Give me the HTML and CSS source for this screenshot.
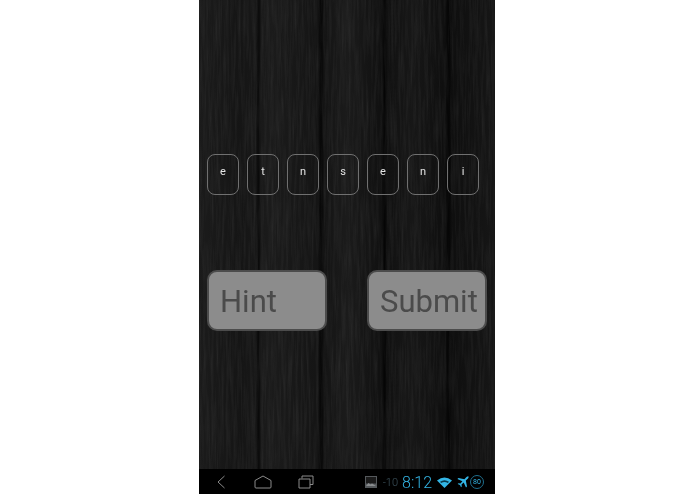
FILE: index.html
```
<!DOCTYPE html>
<html lang="en">
<head>
<meta charset="utf-8">
<title>Word game</title>
<link rel="stylesheet" href="styles.css">
</head>
<body>
<main class="phone">
  <section class="game">
    <svg class="grain" width="296" height="469" aria-hidden="true">
      <filter id="wood" x="0" y="0" width="100%" height="100%">
        <feTurbulence type="fractalNoise" baseFrequency="0.4 0.02" numOctaves="4" seed="7"/>
        <feColorMatrix type="matrix" values="0 0 0 0 1  0 0 0 0 1  0 0 0 0 1  1.5 0 0 0 -0.62"/>
      </filter>
      <rect width="296" height="469" filter="url(#wood)"/>
    </svg>
    <div class="tiles">
      <span class="tile">e</span><span class="tile">t</span><span class="tile">n</span><span class="tile">s</span><span class="tile">e</span><span class="tile">n</span><span class="tile">i</span>
    </div>
    <div class="actions">
      <button class="action">Hint</button>
      <button class="action">Submit</button>
    </div>
  </section>
  <footer class="navbar">
    <div class="nav-keys">
      <svg class="key-back" width="10" height="14" viewBox="0 0 10 14"><path d="M8.500 1 2 7l6.500 6"/></svg>
      <svg class="key-home" width="18" height="14" viewBox="0 0 18 14"><path d="M1 5.500 9 1l8 4.500V12q0 1-1 1H2q-1 0-1-1z"/></svg>
      <svg class="key-recent" width="16" height="14" viewBox="0 0 16 14"><path d="M4 3.500V1h11v8.500h-3M1 4h11v9H1z"/></svg>
    </div>
    <div class="status">
      <svg class="pic" width="12" height="12" viewBox="0 0 12 12"><rect width="12" height="12" fill="#55595c"/><rect x="1" y="1" width="10" height="6.500" fill="#1a1a1a"/><path d="M1 10 3.500 7l2 1.500L7 7.500 11 10z" fill="#8a8d8f"/></svg>
      <span class="temp">-10</span>
      <span class="clock">8:12</span>
      <svg class="wifi" width="15" height="11" viewBox="0 0 15 11"><path d="M0 3.500Q7.500-2.500 15 3.500L7.500 11z" fill="#33b5e5"/><path d="M3 4.800Q7.500 1.700 12 4.800L10.800 6Q7.500 3.800 4.200 6z" fill="#0a3a4c"/></svg>
      <svg class="plane" width="12" height="12" viewBox="0 0 12 12"><path d="M11.500.5q.5.500-.5 2L8.800 4.600l1.200 6-1 1-2.300-5L4.500 8.500l.3 2-.8.800-1-2.300L.7 8l.8-.8 2 .3 1.900-2.200L.4 3l1-1 6 1.200L9.500 1q1.500-1 2-.5z" fill="#33b5e5"/></svg>
      <span class="battery">80</span>
    </div>
  </footer>
</main>
</body>
</html>
```
FILE: styles.css
```
* { box-sizing: border-box; }
html, body { margin: 0; height: 100%; background: #fff; }
body { display: flex; justify-content: center; padding-right: 1px; }
.phone { width: 296px; height: 494px; display: flex; flex-direction: column; background: #000; font-family: Roboto, "Liberation Sans", sans-serif; }
.game {
  position: relative;
  flex: 1;
  padding: 154px 8px 0;
  background:
    linear-gradient(90deg, transparent 57px, rgba(0,0,0,.6) 59px, rgba(0,0,0,.6) 60px, transparent 62px),
    linear-gradient(90deg, transparent 119px, rgba(0,0,0,.6) 121px, rgba(0,0,0,.6) 123px, transparent 125px),
    linear-gradient(90deg, transparent 183px, rgba(0,0,0,.7) 185px, rgba(0,0,0,.7) 186px, transparent 188px),
    linear-gradient(90deg, transparent 246px, rgba(0,0,0,.6) 249px, rgba(0,0,0,.6) 250px, transparent 253px),
    linear-gradient(90deg, #1b1b1b 0, #151515 14%, #1b1b1b 24%, #141414 42%, #1b1b1b 50%, #101010 62%, #171717 72%, #0e0e0e 84%, #161616 100%);
}
.grain { position: absolute; inset: 0; opacity: .08; mix-blend-mode: screen; }
.tiles { position: relative; display: flex; gap: 8px; }
.tile {
  width: 32px;
  height: 41px;
  display: flex;
  align-items: center;
  justify-content: center;
  padding-bottom: 6px;
  border: 1px solid #707070;
  border-radius: 8px;
  color: #e4e4e4;
  font-size: 11px;
}
.actions { position: relative; display: flex; justify-content: space-between; margin-top: 75px; }
.action {
  width: 120px;
  height: 61px;
  padding: 2px 0 0 11px;
  border: 2px solid #4c4c4c;
  border-radius: 10px;
  background: #8c8c8c;
  color: #4b4b4b;
  font: 400 31px Roboto, "Liberation Sans", sans-serif;
  text-align: left;
}
.navbar {
  height: 25px;
  display: flex;
  justify-content: space-between;
  align-items: center;
  padding-top: 1px;
  background: #000;
}
.nav-keys { display: flex; align-items: center; padding-left: 17px; }
.nav-keys svg { fill: none; stroke: #8b8b8b; stroke-width: 1; }
.key-home { margin-left: 28px; }
.key-recent { margin-left: 26px; }
.status { display: flex; align-items: center; padding-right: 11px; }
.temp { margin-left: 6px; color: #3f5661; font-size: 11px; font-weight: 300; }
.clock { margin-left: 4px; color: #33b5e5; font-size: 16px; font-weight: 300; }
.wifi { margin-left: 5px; }
.plane { margin-left: 5px; }
.battery {
  width: 14px;
  height: 14px;
  margin-left: 1px;
  display: flex;
  align-items: center;
  justify-content: center;
  border: 1px solid #1f6f8e;
  border-radius: 50%;
  color: #33b5e5;
  font-size: 7px;
}
```
